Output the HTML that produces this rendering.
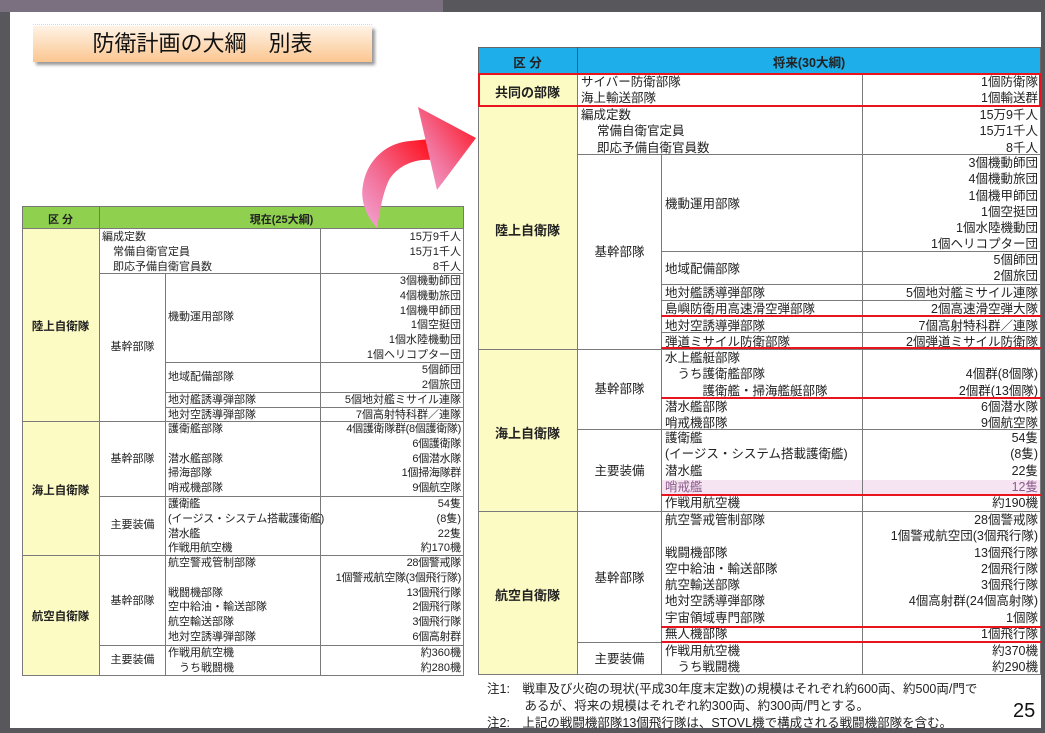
<!DOCTYPE html>
<html><head><meta charset="utf-8">
<style>
*{margin:0;padding:0;box-sizing:border-box}
body{width:1045px;height:733px;overflow:hidden;background:#58585c;font-family:"Liberation Sans","Noto Sans CJK JP",sans-serif;color:#222;position:relative}
.pg{position:absolute;left:10px;top:12px;width:1031px;height:716px;background:#fff}
.topbar{position:absolute;left:0;top:0;width:443px;height:12px;background:#7b7080}
.a{position:absolute}
.c{position:absolute;border:1px solid #7a7a7a}
.t{position:absolute;white-space:pre}
.R{font-size:12.5px;line-height:16.3px}
.L{font-size:11px;line-height:14.8px}
.rt{text-align:right}
.rl{position:absolute;height:2px;background:#e8141e}
</style></head><body>
<div class="topbar"></div>
<div class="pg"></div>

<!-- title -->
<div class="a" style="left:33px;top:24px;width:339px;height:1px;border-top:1px dotted #f0c8d8"></div>
<div class="a" style="left:33px;top:26px;width:339px;height:36px;background:linear-gradient(#fff3e6,#fbc690);box-shadow:3px 3px 3px #999"></div>
<div class="t" style="left:33px;top:28px;width:339px;text-align:center;font-size:22px;line-height:32px;color:#111">防衛計画の大綱　別表</div>

<!-- LEFT TABLE -->
<div class="a" style="left:22px;top:206px;width:442px;height:23px;background:#8fd14f;border:1px solid #777"></div>
<div class="a" style="left:99px;top:206px;width:1px;height:23px;background:#777"></div>
<div class="t" style="left:22px;top:211px;width:77px;text-align:center;font-size:11px;font-weight:bold">区 分</div>
<div class="t" style="left:99px;top:211px;width:365px;text-align:center;font-size:11px;font-weight:bold">現在(25大綱)</div>
<div class="c" style="left:22px;top:228px;width:78px;height:194px;background:#fdfbc4"></div>
<div class="c" style="left:22px;top:421px;width:78px;height:135px;background:#fdfbc4"></div>
<div class="c" style="left:22px;top:555px;width:78px;height:121px;background:#fdfbc4"></div>
<div class="t" style="left:22px;top:318px;width:77px;text-align:center;font-size:11.5px;font-weight:bold">陸上自衛隊</div>
<div class="t" style="left:22px;top:482px;width:77px;text-align:center;font-size:11.5px;font-weight:bold">海上自衛隊</div>
<div class="t" style="left:22px;top:608px;width:77px;text-align:center;font-size:11.5px;font-weight:bold">航空自衛隊</div>
<!-- cells -->
<div class="c" style="left:99px;top:228px;width:222px;height:46px"></div>
<div class="c" style="left:320px;top:228px;width:144px;height:46px"></div>
<div class="c" style="left:99px;top:273px;width:67px;height:149px"></div>
<div class="c" style="left:165px;top:273px;width:156px;height:90px"></div>
<div class="c" style="left:320px;top:273px;width:144px;height:90px"></div>
<div class="c" style="left:165px;top:362px;width:156px;height:31px"></div>
<div class="c" style="left:320px;top:362px;width:144px;height:31px"></div>
<div class="c" style="left:165px;top:392px;width:156px;height:16px"></div>
<div class="c" style="left:320px;top:392px;width:144px;height:16px"></div>
<div class="c" style="left:165px;top:407px;width:156px;height:15px"></div>
<div class="c" style="left:320px;top:407px;width:144px;height:15px"></div>
<div class="c" style="left:99px;top:421px;width:67px;height:76px"></div>
<div class="c" style="left:165px;top:421px;width:156px;height:76px"></div>
<div class="c" style="left:320px;top:421px;width:144px;height:76px"></div>
<div class="c" style="left:99px;top:496px;width:67px;height:60px"></div>
<div class="c" style="left:165px;top:496px;width:156px;height:60px"></div>
<div class="c" style="left:320px;top:496px;width:144px;height:60px"></div>
<div class="c" style="left:99px;top:555px;width:67px;height:91px"></div>
<div class="c" style="left:165px;top:555px;width:156px;height:91px"></div>
<div class="c" style="left:320px;top:555px;width:144px;height:91px"></div>
<div class="c" style="left:99px;top:645px;width:67px;height:31px"></div>
<div class="c" style="left:165px;top:645px;width:156px;height:31px"></div>
<div class="c" style="left:320px;top:645px;width:144px;height:31px"></div>
<!-- left text -->
<div class="t L" style="left:102px;top:230px">編成定数
　常備自衛官定員
　即応予備自衛官員数</div>
<div class="t L rt" style="left:320px;top:230px;width:141px">15万9千人
15万1千人
8千人</div>
<div class="t L" style="left:99px;top:340px;width:67px;text-align:center">基幹部隊</div>
<div class="t L" style="left:168px;top:310px">機動運用部隊</div>
<div class="t L rt" style="left:320px;top:274px;width:141px">3個機動師団
4個機動旅団
1個機甲師団
1個空挺団
1個水陸機動団
1個ヘリコプター団</div>
<div class="t L" style="left:168px;top:370px">地域配備部隊</div>
<div class="t L rt" style="left:320px;top:363px;width:141px">5個師団
2個旅団</div>
<div class="t L" style="left:168px;top:393px">地対艦誘導弾部隊
地対空誘導弾部隊</div>
<div class="t L rt" style="left:320px;top:393px;width:141px">5個地対艦ミサイル連隊
7個高射特科群／連隊</div>
<div class="t L" style="left:99px;top:452px;width:67px;text-align:center">基幹部隊</div>
<div class="t L" style="left:168px;top:422px">護衛艦部隊

潜水艦部隊
掃海部隊
哨戒機部隊</div>
<div class="t L rt" style="left:320px;top:422px;width:141px;letter-spacing:-0.3px">4個護衛隊群(8個護衛隊)
6個護衛隊
6個潜水隊
1個掃海隊群
9個航空隊</div>
<div class="t L" style="left:99px;top:518px;width:67px;text-align:center">主要装備</div>
<div class="t L" style="left:168px;top:497px;letter-spacing:-0.3px">護衛艦
(イージス・システム搭載護衛艦)
潜水艦
作戦用航空機</div>
<div class="t L rt" style="left:320px;top:497px;width:141px">54隻
(8隻)
22隻
約170機</div>
<div class="t L" style="left:99px;top:594px;width:67px;text-align:center">基幹部隊</div>
<div class="t L" style="left:168px;top:556px">航空警戒管制部隊

戦闘機部隊
空中給油・輸送部隊
航空輸送部隊
地対空誘導弾部隊</div>
<div class="t L rt" style="left:320px;top:556px;width:141px;letter-spacing:-0.3px">28個警戒隊
1個警戒航空隊(3個飛行隊)
13個飛行隊
2個飛行隊
3個飛行隊
6個高射群</div>
<div class="t L" style="left:99px;top:653px;width:67px;text-align:center">主要装備</div>
<div class="t L" style="left:168px;top:646px">作戦用航空機
　うち戦闘機</div>
<div class="t L rt" style="left:320px;top:646px;width:141px">約360機
約280機</div>

<!-- arrow (on top of table header) -->
<svg class="a" style="left:0;top:0;z-index:5" width="1045" height="733">
<defs><linearGradient id="g" x1="0" y1="1" x2="1" y2="0"><stop offset="0" stop-color="#f2a8d8"/><stop offset="0.4" stop-color="#f27098"/><stop offset="1" stop-color="#ff0a14"/></linearGradient></defs>
<path d="M377,228 C366,216 360,200 363,185 C367,160 386,143 410,141 L430,139 L433,160 C412,158 396,168 389,180 C382,195 380,212 377,228 Z" fill="url(#g)"/>
<polygon points="418,107 476,138 437,190" fill="url(#g)"/>
</svg>

<!-- RIGHT TABLE -->
<div class="a" style="left:478px;top:47px;width:563px;height:27px;background:#1eaeea;border:1px solid #666"></div>
<div class="a" style="left:577px;top:47px;width:1px;height:27px;background:#555"></div>
<div class="t" style="left:478px;top:52px;width:99px;text-align:center;font-size:12.5px;font-weight:bold">区 分</div>
<div class="t" style="left:577px;top:52px;width:464px;text-align:center;font-size:12.5px;font-weight:bold">将来(30大綱)</div>
<div class="c" style="left:478px;top:73px;width:100px;height:34px;background:#fdfbc4"></div>
<div class="c" style="left:478px;top:106px;width:100px;height:244px;background:#fdfbc4"></div>
<div class="c" style="left:478px;top:349px;width:100px;height:163px;background:#fdfbc4"></div>
<div class="c" style="left:478px;top:511px;width:100px;height:164px;background:#fdfbc4"></div>
<div class="t" style="left:478px;top:82px;width:99px;text-align:center;font-size:13px;font-weight:bold">共同の部隊</div>
<div class="t" style="left:478px;top:220px;width:99px;text-align:center;font-size:13px;font-weight:bold">陸上自衛隊</div>
<div class="t" style="left:478px;top:423px;width:99px;text-align:center;font-size:13px;font-weight:bold">海上自衛隊</div>
<div class="t" style="left:478px;top:585px;width:99px;text-align:center;font-size:13px;font-weight:bold">航空自衛隊</div>
<!-- cells -->
<div class="c" style="left:577px;top:73px;width:286px;height:34px"></div>
<div class="c" style="left:862px;top:73px;width:179px;height:34px"></div>
<div class="c" style="left:577px;top:106px;width:286px;height:49px"></div>
<div class="c" style="left:862px;top:106px;width:179px;height:49px"></div>
<div class="c" style="left:577px;top:154px;width:85px;height:196px"></div>
<div class="c" style="left:661px;top:154px;width:202px;height:98px"></div>
<div class="c" style="left:862px;top:154px;width:179px;height:98px"></div>
<div class="c" style="left:661px;top:251px;width:202px;height:34px"></div>
<div class="c" style="left:862px;top:251px;width:179px;height:34px"></div>
<div class="c" style="left:661px;top:284px;width:202px;height:17px"></div>
<div class="c" style="left:862px;top:284px;width:179px;height:17px"></div>
<div class="c" style="left:661px;top:300px;width:202px;height:17px"></div>
<div class="c" style="left:862px;top:300px;width:179px;height:17px"></div>
<div class="c" style="left:661px;top:316px;width:202px;height:17px"></div>
<div class="c" style="left:862px;top:316px;width:179px;height:17px"></div>
<div class="c" style="left:661px;top:332px;width:202px;height:18px"></div>
<div class="c" style="left:862px;top:332px;width:179px;height:18px"></div>
<div class="c" style="left:577px;top:349px;width:85px;height:81px"></div>
<div class="c" style="left:661px;top:349px;width:202px;height:81px"></div>
<div class="c" style="left:862px;top:349px;width:179px;height:81px"></div>
<div class="a" style="left:662px;top:480px;width:378px;height:15px;background:#f6e4f2"></div>
<div class="c" style="left:577px;top:429px;width:85px;height:83px"></div>
<div class="c" style="left:661px;top:429px;width:202px;height:67px"></div>
<div class="c" style="left:862px;top:429px;width:179px;height:67px"></div>
<div class="c" style="left:661px;top:495px;width:202px;height:17px"></div>
<div class="c" style="left:862px;top:495px;width:179px;height:17px"></div>
<div class="c" style="left:577px;top:511px;width:85px;height:132px"></div>
<div class="c" style="left:661px;top:511px;width:202px;height:116px"></div>
<div class="c" style="left:862px;top:511px;width:179px;height:116px"></div>
<div class="c" style="left:661px;top:626px;width:202px;height:17px"></div>
<div class="c" style="left:862px;top:626px;width:179px;height:17px"></div>
<div class="c" style="left:577px;top:642px;width:85px;height:33px"></div>
<div class="c" style="left:661px;top:642px;width:202px;height:33px"></div>
<div class="c" style="left:862px;top:642px;width:179px;height:33px"></div>
<!-- right text -->
<div class="t R" style="left:581px;top:74px">サイバー防衛部隊
海上輸送部隊</div>
<div class="t R rt" style="left:862px;top:74px;width:176px">1個防衛隊
1個輸送群</div>
<div class="t R" style="left:581px;top:107px">編成定数
　 常備自衛官定員
　 即応予備自衛官員数</div>
<div class="t R rt" style="left:862px;top:107px;width:176px">15万9千人
15万1千人
8千人</div>
<div class="t R" style="left:577px;top:244px;width:85px;text-align:center">基幹部隊</div>
<div class="t R" style="left:665px;top:196px">機動運用部隊</div>
<div class="t R rt" style="left:862px;top:155px;width:176px">3個機動師団
4個機動旅団
1個機甲師団
1個空挺団
1個水陸機動団
1個ヘリコプター団</div>
<div class="t R" style="left:665px;top:261px">地域配備部隊</div>
<div class="t R rt" style="left:862px;top:252px;width:176px">5個師団
2個旅団</div>
<div class="t R" style="left:665px;top:285px">地対艦誘導弾部隊
島嶼防衛用高速滑空弾部隊
地対空誘導弾部隊
弾道ミサイル防衛部隊</div>
<div class="t R rt" style="left:862px;top:285px;width:176px">5個地対艦ミサイル連隊
2個高速滑空弾大隊
7個高射特科群／連隊
2個弾道ミサイル防衛隊</div>
<div class="t R" style="left:577px;top:381px;width:85px;text-align:center">基幹部隊</div>
<div class="t R" style="left:665px;top:350px">水上艦艇部隊
　うち護衛艦部隊
　　　護衛艦・掃海艦艇部隊
潜水艦部隊
哨戒機部隊</div>
<div class="t R rt" style="left:862px;top:350px;width:176px">
4個群(8個隊)
2個群(13個隊)
6個潜水隊
9個航空隊</div>
<div class="t R" style="left:577px;top:463px;width:85px;text-align:center">主要装備</div>
<div class="t R" style="left:665px;top:430px">護衛艦
(イージス・システム搭載護衛艦)
潜水艦
<span style="color:#8a5a8a">哨戒艦</span>
作戦用航空機</div>
<div class="t R rt" style="left:862px;top:430px;width:176px">54隻
(8隻)
22隻
<span style="color:#8a5a8a">12隻</span>
約190機</div>
<div class="t R" style="left:577px;top:570px;width:85px;text-align:center">基幹部隊</div>
<div class="t R" style="left:665px;top:512px">航空警戒管制部隊

戦闘機部隊
空中給油・輸送部隊
航空輸送部隊
地対空誘導弾部隊
宇宙領域専門部隊
無人機部隊</div>
<div class="t R rt" style="left:862px;top:512px;width:176px">28個警戒隊
1個警戒航空団(3個飛行隊)
13個飛行隊
2個飛行隊
3個飛行隊
4個高射群(24個高射隊)
1個隊
1個飛行隊</div>
<div class="t R" style="left:577px;top:651px;width:85px;text-align:center">主要装備</div>
<div class="t R" style="left:665px;top:643px">作戦用航空機
　うち戦闘機</div>
<div class="t R rt" style="left:862px;top:643px;width:176px">約370機
約290機</div>

<!-- red marks -->
<div class="a" style="left:478px;top:73px;width:563px;height:34px;border:2px solid #e8141e"></div>
<div class="rl" style="left:661px;top:315px;width:380px"></div>
<div class="rl" style="left:661px;top:347px;width:380px"></div>
<div class="rl" style="left:661px;top:397px;width:380px"></div>
<div class="rl" style="left:661px;top:494px;width:380px"></div>
<div class="rl" style="left:661px;top:626px;width:380px"></div>
<div class="rl" style="left:661px;top:641px;width:380px"></div>

<!-- notes -->
<div class="t" style="left:487px;top:681px;font-size:12.5px;line-height:17px">注1:　戦車及び火砲の現状(平成30年度末定数)の規模はそれぞれ約600両、約500両/門で
　　　あるが、将来の規模はそれぞれ約300両、約300両/門とする。
注2:　上記の戦闘機部隊13個飛行隊は、STOVL機で構成される戦闘機部隊を含む。</div>
<div class="t" style="left:1013px;top:700px;font-size:20px;line-height:22px;color:#111">25</div>
</body></html>
